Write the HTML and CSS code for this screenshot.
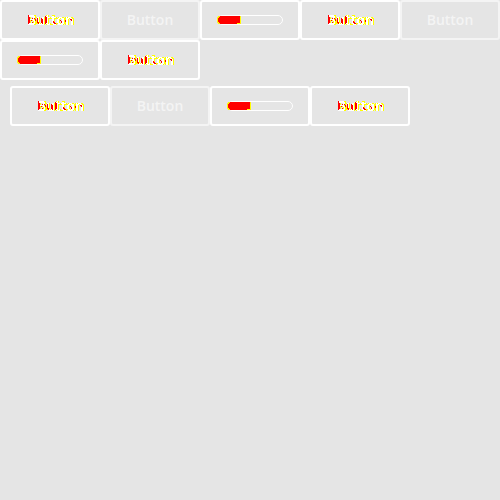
FILE: index.html
```html
<!DOCTYPE html>
<html lang="en">
<head>
<meta charset="utf-8">
<title>Buttons</title>
<link rel="stylesheet" href="styles.css">
</head>
<body>
<svg class="defs" width="0" height="0" aria-hidden="true">
  <filter id="bands" x="-10%" y="-10%" width="120%" height="120%" color-interpolation-filters="sRGB">
    <feOffset in="SourceAlpha" dx="1" dy="0" result="shift"/>
    <feMerge result="wide"><feMergeNode in="SourceAlpha"/><feMergeNode in="shift"/></feMerge>
    <feComponentTransfer in="wide" result="edge">
      <feFuncR type="discrete" tableValues="1"/>
      <feFuncG type="discrete" tableValues="1"/>
      <feFuncB type="discrete" tableValues="0"/>
      <feFuncA type="discrete" tableValues="0 1 1 1 1 1 1 1"/>
    </feComponentTransfer>
    <feComponentTransfer in="SourceAlpha" result="core">
      <feFuncR type="discrete" tableValues="1"/>
      <feFuncG type="discrete" tableValues="1"/>
      <feFuncB type="discrete" tableValues="1"/>
      <feFuncA type="discrete" tableValues="0 0 1 1"/>
    </feComponentTransfer>
    <feMerge><feMergeNode in="edge"/><feMergeNode in="core"/></feMerge>
  </filter>
  <symbol id="specks" viewBox="0 0 47 12">
    <path shape-rendering="crispEdges" stroke="#f00" fill="none" d="M1.5 0v9M2.5 2v6M5.5 3v1M4.5 5v1M5.5 7v1M7.5 3v1M8.5 4v2M10.5 3v5M11.5 7v2M14.5 3v5M15.5 4v5M18.5 1v8M19.5 2v6M26.5 6v2M27.5 7v2M28.5 8v1M33.5 5v1M34.5 6v2M38.5 5v2M43.5 4v1M44.5 4v2"/>
  </symbol>
</svg>
<div class="grid">
  <div class="cell"><div class="mark"><span class="label">Button</span><svg class="specks"><use href="#specks"/></svg></div></div>
  <div class="cell disabled"><span>Button</span></div>
  <div class="cell"><div class="progress"><div class="fill"></div></div></div>
  <div class="cell"><div class="mark"><span class="label">Button</span><svg class="specks"><use href="#specks"/></svg></div></div>
  <div class="cell disabled"><span>Button</span></div>
  <div class="cell"><div class="progress"><div class="fill"></div></div></div>
  <div class="cell"><div class="mark"><span class="label">Button</span><svg class="specks"><use href="#specks"/></svg></div></div>
</div>
<div class="row">
  <div class="cell"><div class="mark"><span class="label">Button</span><svg class="specks"><use href="#specks"/></svg></div></div>
  <div class="cell disabled"><span>Button</span></div>
  <div class="cell"><div class="progress"><div class="fill"></div></div></div>
  <div class="cell"><div class="mark"><span class="label">Button</span><svg class="specks"><use href="#specks"/></svg></div></div>
</div>
</body>
</html>
```
FILE: styles.css
```css
* { box-sizing: border-box; }
body {
  margin: 0;
  min-height: 100vh;
  background: #e5e5e5;
  font: 600 14px/20px "Open Sans", sans-serif;
  color: #fff;
}
.defs { display: block; height: 0; }
.grid { display: flex; flex-wrap: wrap; }
.row { display: flex; margin: 6px 0 0 10px; }
.cell {
  display: flex;
  align-items: center;
  justify-content: center;
  width: 100px;
  height: 40px;
  border: 2px solid #fff;
  border-radius: 3px;
}
.disabled { border-color: #f4f4f4; color: #f4f4f4; }
.mark { position: relative; width: 46px; height: 20px; white-space: nowrap; }
.label { display: block; filter: url(#bands); }
.specks {
  position: absolute;
  left: 0;
  top: 5px;
  width: 47px;
  height: 12px;
}
.progress {
  width: 66px;
  height: 10px;
  border: 1px solid #fff;
  border-radius: 5px;
}
.fill {
  width: 24px;
  height: 8px;
  margin-left: -1px;
  background:
    linear-gradient(#ff0, #ff0) 0 0 / 2px 1px no-repeat,
    linear-gradient(#ff0, #ff0) 0 100% / 2px 1px no-repeat,
    linear-gradient(#ff0, #ff0) 0 0 / 1px 2px no-repeat,
    linear-gradient(#ff0, #ff0) 0 100% / 1px 2px no-repeat,
    linear-gradient(#ff0, #ff0) 100% 100% / 3px 1px no-repeat,
    #f00;
  border: 0 solid #ff0;
  border-width: 0 1px;
  border-radius: 3px 1px 1px 3px;
}
```
